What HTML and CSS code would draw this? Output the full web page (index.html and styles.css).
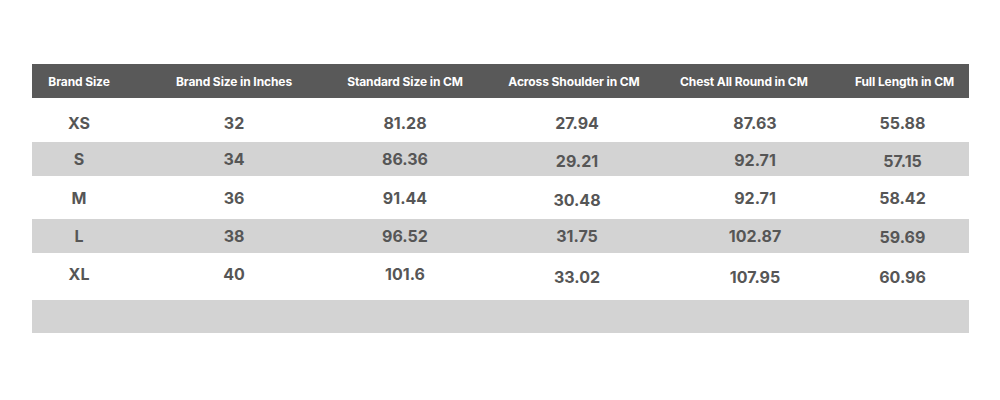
FILE: index.html
```html
<!DOCTYPE html>
<html>
<head>
<meta charset="utf-8">
<link rel="stylesheet" href="styles.css">
</head>
<body>
<div class="chart">
  <div class="row head">
    <div class="cell">Brand Size</div>
    <div class="cell">Brand Size in Inches</div>
    <div class="cell">Standard Size in CM</div>
    <div class="cell">Across Shoulder in CM</div>
    <div class="cell">Chest All Round in CM</div>
    <div class="cell last">Full Length in CM</div>
  </div>
  <div class="row val white r1">
    <div class="cell">XS</div><div class="cell">32</div><div class="cell">81.28</div><div class="cell">27.94</div><div class="cell">87.63</div><div class="cell last">55.88</div>
  </div>
  <div class="row val gray r2">
    <div class="cell">S</div><div class="cell">34</div><div class="cell">86.36</div><div class="cell d2">29.21</div><div class="cell d1">92.71</div><div class="cell last d2">57.15</div>
  </div>
  <div class="row val white r3">
    <div class="cell">M</div><div class="cell">36</div><div class="cell">91.44</div><div class="cell d2">30.48</div><div class="cell">92.71</div><div class="cell last">58.42</div>
  </div>
  <div class="row val gray r4">
    <div class="cell">L</div><div class="cell">38</div><div class="cell">96.52</div><div class="cell">31.75</div><div class="cell">102.87</div><div class="cell last d1">59.69</div>
  </div>
  <div class="row val white r5">
    <div class="cell">XL</div><div class="cell">40</div><div class="cell">101.6</div><div class="cell d3">33.02</div><div class="cell d3">107.95</div><div class="cell last d3">60.96</div>
  </div>
  <div class="row gray r6"></div>
</div>
</body>
</html>
```

FILE: styles.css
```css
html, body {
  margin: 0;
  padding: 0;
  background: #ffffff;
}
body {
  width: 1000px;
  height: 400px;
  overflow: hidden;
  font-family: Inter, "Open Sans", "Liberation Sans", sans-serif;
}
.chart {
  margin: 64px 0 0 32px;
  width: 937px;
}
.row {
  display: grid;
  grid-template-columns: 94px 216px 126px 212px 126px 163px;
  align-items: center;
}
.cell {
  text-align: center;
  white-space: nowrap;
}
.cell.last {
  padding-left: 34px;
}
.head {
  height: 34px;
  background: #595959;
  color: #ffffff;
  font-size: 12px;
  font-weight: 700;
  letter-spacing: -0.1px;
}
.white { background: #ffffff; }
.gray { background: #d3d3d3; }
.val .cell {
  color: #565656;
  font-size: 16px;
  font-weight: 700;
}
.val .cell:nth-child(4) { padding-left: 6px; }
.val .cell:nth-child(5) { padding-left: 24px; }
.val .cell.last { padding-left: 30px; }
.d1 { padding-top: 2px; }
.d2 { padding-top: 4px; }
.d3 { padding-top: 6px; }
.r1 { height: 44px; padding-top: 5px; box-sizing: border-box; }
.r2 { height: 34px; }
.r3 { height: 43px; }
.r4 { height: 34px; }
.r5 { height: 47px; padding-bottom: 6px; box-sizing: border-box; }
.r6 { height: 33px; }
```
